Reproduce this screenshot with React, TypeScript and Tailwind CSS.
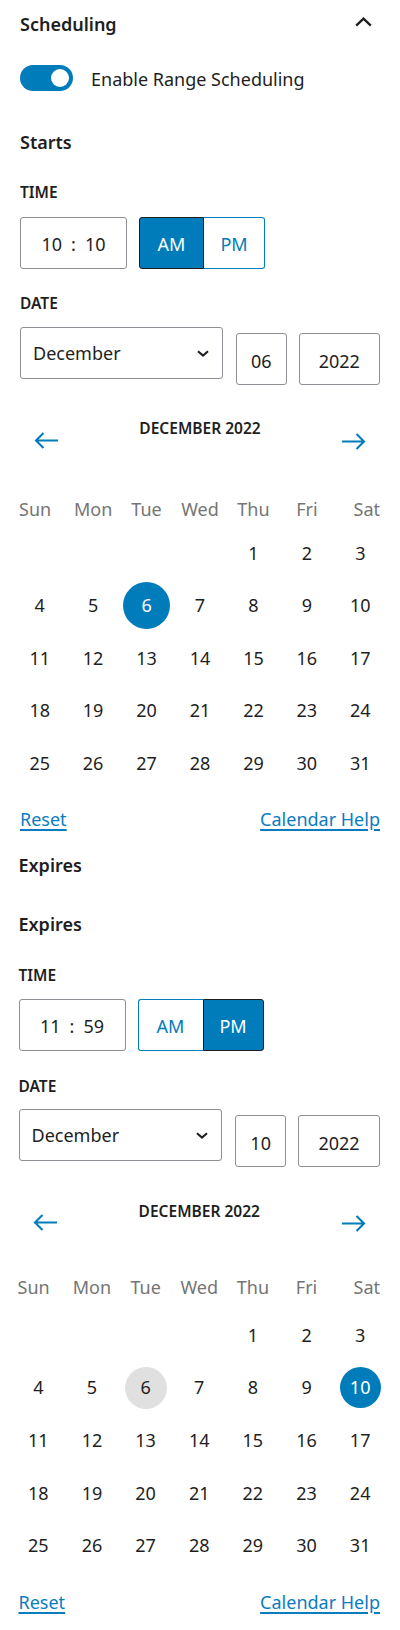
import React from 'react';

const cx = (...a: (string | false | undefined)[]) => a.filter(Boolean).join(' ');

function ChevronUp() {
  return (
    <svg width="17" height="10" viewBox="0 0 17 10" fill="none">
      <path d="M1.2 8.6L8.5 1.6L15.8 8.6" stroke="#1e1e1e" strokeWidth="2.3" />
    </svg>
  );
}

function ChevronDown() {
  return (
    <svg width="12" height="7" viewBox="0 0 12 7" fill="none">
      <path d="M1 1.2L6 5.6L11 1.2" stroke="#1e1e1e" strokeWidth="2" />
    </svg>
  );
}

function ArrowLeft() {
  return (
    <svg width="24" height="17" viewBox="0 0 24 17" fill="none">
      <path d="M9.5 1L2 8.5L9.5 16M2 8.5H24" stroke="#007cba" strokeWidth="2.1" />
    </svg>
  );
}

function ArrowRight() {
  return (
    <svg width="24" height="17" viewBox="0 0 24 17" fill="none">
      <path d="M14.5 1L22 8.5L14.5 16M22 8.5H0" stroke="#007cba" strokeWidth="2.1" />
    </svg>
  );
}

function Toggle() {
  return (
    <div className="w-[53px] h-[26px] rounded-full bg-[#007cba] flex items-center justify-end pr-[4px] shrink-0">
      <div className="w-[18px] h-[18px] rounded-full bg-white" />
    </div>
  );
}

function Label({ text, cls }: { text: string; cls: string }) {
  return (
    <div className={cx('h-[24px] flex items-center text-[15.5px] font-semibold uppercase text-[#1e1e1e]', cls)}>
      {text}
    </div>
  );
}

function TimeRow({ h, m, pm, cls }: { h: string; m: string; pm: boolean; cls: string }) {
  return (
    <div className={cx('flex h-[52px]', cls)}>
      <div className="w-[107px] h-full border border-[#8c8f94] rounded-[3px] flex items-center justify-center gap-[9px] text-[18px] text-[#1e1e1e] pt-[2px]">
        <span>{h}</span>
        <span>:</span>
        <span>{m}</span>
      </div>
      <div className="ml-[12px] flex h-full text-[18px]">
        <div
          className={
            pm
              ? 'w-[65px] h-full flex items-center justify-center pt-[2px] text-[#007cba] border border-[#007cba] border-r-0 rounded-l-[3px] bg-white'
              : 'w-[65px] h-full flex items-center justify-center pt-[2px] text-white border border-[#1e1e1e] rounded-l-[3px] bg-[#007cba]'
          }
        >
          AM
        </div>
        <div
          className={
            pm
              ? 'w-[61px] h-full flex items-center justify-center pt-[2px] text-white border border-[#1e1e1e] rounded-r-[3px] bg-[#007cba]'
              : 'w-[61px] h-full flex items-center justify-center pt-[2px] text-[#007cba] border border-[#007cba] border-l-0 rounded-r-[3px] bg-white'
          }
        >
          PM
        </div>
      </div>
    </div>
  );
}

function DateRow({ day, cls }: { day: string; cls: string }) {
  return (
    <div className={cx('flex items-start text-[18px] text-[#1e1e1e]', cls)}>
      <div className="w-[204px] h-[52px] border border-[#8c8f94] rounded-[3px] flex items-center justify-between pl-[12px] pr-[13px]">
        <span>December</span>
        <ChevronDown />
      </div>
      <div className="ml-[13px] mt-[6px] w-[51px] h-[52px] border border-[#8c8f94] rounded-[3px] flex items-center justify-center pt-[4px]">
        {day}
      </div>
      <div className="ml-[12px] mt-[6px] w-[82px] h-[52px] border border-[#8c8f94] rounded-[3px] flex items-center justify-center pt-[4px]">
        2022
      </div>
    </div>
  );
}

const NAMES = ['Sun', 'Mon', 'Tue', 'Wed', 'Thu', 'Fri', 'Sat'];

function Calendar({
  selected,
  big,
  gray,
  navCls,
  namesCls,
  gridCls,
}: {
  selected: number;
  big: boolean;
  gray?: number;
  navCls: string;
  namesCls: string;
  gridCls: string;
}) {
  const cells: (number | null)[] = [null, null, null, null];
  for (let i = 1; i <= 31; i++) cells.push(i);
  return (
    <div>
      <div className={cx('flex justify-between items-start h-[33px] px-[14px]', navCls)}>
        <div className="mt-[15px]">
          <ArrowLeft />
        </div>
        <div className="h-[24px] flex items-center text-[15.5px] font-semibold text-[#1e1e1e]">DECEMBER 2022</div>
        <div className="mt-[16px]">
          <ArrowRight />
        </div>
      </div>
      <div className={cx('-mx-[7px] grid grid-cols-7 h-[24px] items-center text-[18px] text-[#757575]', namesCls)}>
        {NAMES.map((n, i) => (
          <div key={n} className={i === 0 ? 'text-left pl-[6px]' : i === 6 ? 'text-right pr-[7px]' : 'text-center'}>
            {n}
          </div>
        ))}
      </div>
      <div className={cx('-mx-[7px] grid grid-cols-7 auto-rows-[47px] gap-y-[5.6px] text-[18px] text-[#1e1e1e]', gridCls)}>
        {cells.map((d, i) => (
          <div key={i} className="flex items-center justify-center">
            {d === null ? null : d === selected ? (
              <span
                className={
                  big
                    ? 'w-[47px] h-[47px] rounded-full bg-[#007cba] text-white flex items-center justify-center'
                    : 'w-[41px] h-[41px] rounded-full bg-[#007cba] text-white flex items-center justify-center'
                }
              >
                {d}
              </span>
            ) : d === gray ? (
              <span className="w-[42px] h-[42px] rounded-full bg-[#e0e0e0] flex items-center justify-center">{d}</span>
            ) : (
              <span>{d}</span>
            )}
          </div>
        ))}
      </div>
    </div>
  );
}

function Links({ cls }: { cls: string }) {
  return (
    <div className={cx('h-[24px] flex items-center justify-between text-[18px] text-[#0a7cbf]', cls)}>
      <span className="underline underline-offset-[3px] decoration-[1.5px]">Reset</span>
      <span className="underline underline-offset-[3px] decoration-[1.5px]">Calendar Help</span>
    </div>
  );
}

export default function App() {
  return (
    <div className="w-[400px] h-[1630px] bg-white px-[20px] font-['Noto_Sans',sans-serif] text-[#1e1e1e] overflow-hidden">
      <div className="h-[46px] flex items-center justify-between">
        <span className="text-[18px] font-semibold pt-[2px]">Scheduling</span>
        <span className="mr-[8px] mb-[3px]">
          <ChevronUp />
        </span>
      </div>
      <div className="mt-[19px] h-[26px] flex items-center">
        <Toggle />
        <span className="ml-[18px] text-[18px] pt-[2px]">Enable Range Scheduling</span>
      </div>

      <div className="mt-[39px] h-[25px] flex items-center text-[18px] font-semibold">Starts</div>
      <Label text="TIME" cls="mt-[26px]" />
      <TimeRow h="10" m="10" pm={false} cls="mt-[12px]" />
      <Label text="DATE" cls="mt-[23px]" />
      <DateRow day="06" cls="mt-[11px]" />
      <Calendar selected={6} big navCls="mt-[32px]" namesCls="mt-[46px]" gridCls="mt-[9.5px]" />
      <Links cls="mt-[21px]" />

      <div className="-ml-[1.5px]">
        <div className="mt-[22px] h-[24px] flex items-center text-[18px] font-semibold">Expires</div>
        <div className="mt-[34.5px] h-[24px] flex items-center text-[18px] font-semibold">Expires</div>
        <Label text="TIME" cls="mt-[27.5px]" />
        <TimeRow h="11" m="59" pm cls="mt-[11.5px]" />
        <Label text="DATE" cls="mt-[23px]" />
        <DateRow day="10" cls="mt-[11px]" />
        <Calendar selected={10} big={false} gray={6} navCls="mt-[32px]" namesCls="mt-[41.5px]" gridCls="mt-[14px]" />
        <Links cls="mt-[21.4px]" />
      </div>
    </div>
  );
}
